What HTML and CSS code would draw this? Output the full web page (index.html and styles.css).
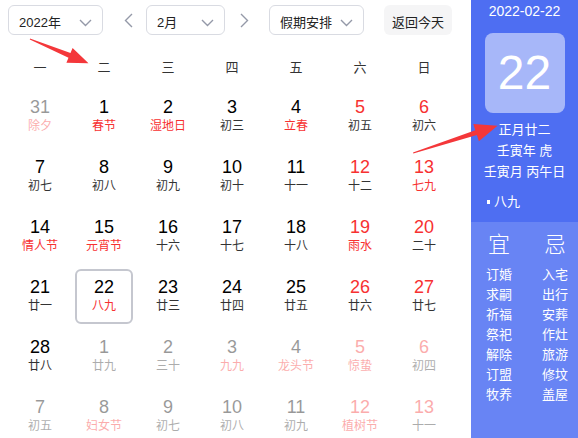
FILE: index.html
```html
<!DOCTYPE html>
<html lang="zh-CN">
<head>
<meta charset="utf-8">
<title>万年历</title>
<link rel="stylesheet" href="styles.css">
</head>
<body>
<div class="page">
  <div class="main">
    <div class="toolbar">
      <div class="select sel-year"><span>2022年</span><svg class="chev" width="13" height="8" viewBox="0 0 13 8"><path d="M1 1l5.5 5.5L12 1" fill="none" stroke="#9499a8" stroke-width="1.4"/></svg></div>
      <svg class="nav nav-prev" width="9" height="15" viewBox="0 0 9 15"><path d="M8 1L1.5 7.5 8 14" fill="none" stroke="#9499a8" stroke-width="1.4"/></svg>
      <div class="select sel-month"><span>2月</span><svg class="chev" width="13" height="8" viewBox="0 0 13 8"><path d="M1 1l5.5 5.5L12 1" fill="none" stroke="#9499a8" stroke-width="1.4"/></svg></div>
      <svg class="nav nav-next" width="9" height="15" viewBox="0 0 9 15"><path d="M1 1l6.5 6.5L1 14" fill="none" stroke="#9499a8" stroke-width="1.4"/></svg>
      <div class="select sel-holiday"><span>假期安排</span><svg class="chev" width="13" height="8" viewBox="0 0 13 8"><path d="M1 1l5.5 5.5L12 1" fill="none" stroke="#9499a8" stroke-width="1.4"/></svg></div>
      <div class="today-btn">返回今天</div>
    </div>
    <div class="weekhead">
      <span>一</span><span>二</span><span>三</span><span>四</span><span>五</span><span>六</span><span>日</span>
    </div>
    <div class="grid">
      <div class="cell other"><div class="box"><span class="num">31</span><span class="lun fest">除夕</span></div></div>
      <div class="cell"><div class="box"><span class="num">1</span><span class="lun fest">春节</span></div></div>
      <div class="cell"><div class="box"><span class="num">2</span><span class="lun fest">湿地日</span></div></div>
      <div class="cell"><div class="box"><span class="num">3</span><span class="lun">初三</span></div></div>
      <div class="cell"><div class="box"><span class="num">4</span><span class="lun fest">立春</span></div></div>
      <div class="cell wk"><div class="box"><span class="num">5</span><span class="lun">初五</span></div></div>
      <div class="cell wk"><div class="box"><span class="num">6</span><span class="lun">初六</span></div></div>

      <div class="cell"><div class="box"><span class="num">7</span><span class="lun">初七</span></div></div>
      <div class="cell"><div class="box"><span class="num">8</span><span class="lun">初八</span></div></div>
      <div class="cell"><div class="box"><span class="num">9</span><span class="lun">初九</span></div></div>
      <div class="cell"><div class="box"><span class="num">10</span><span class="lun">初十</span></div></div>
      <div class="cell"><div class="box"><span class="num">11</span><span class="lun">十一</span></div></div>
      <div class="cell wk"><div class="box"><span class="num">12</span><span class="lun">十二</span></div></div>
      <div class="cell wk"><div class="box"><span class="num">13</span><span class="lun fest">七九</span></div></div>

      <div class="cell"><div class="box"><span class="num">14</span><span class="lun fest">情人节</span></div></div>
      <div class="cell"><div class="box"><span class="num">15</span><span class="lun fest">元宵节</span></div></div>
      <div class="cell"><div class="box"><span class="num">16</span><span class="lun">十六</span></div></div>
      <div class="cell"><div class="box"><span class="num">17</span><span class="lun">十七</span></div></div>
      <div class="cell"><div class="box"><span class="num">18</span><span class="lun">十八</span></div></div>
      <div class="cell wk"><div class="box"><span class="num">19</span><span class="lun fest">雨水</span></div></div>
      <div class="cell wk"><div class="box"><span class="num">20</span><span class="lun">二十</span></div></div>

      <div class="cell"><div class="box"><span class="num">21</span><span class="lun">廿一</span></div></div>
      <div class="cell selected"><div class="box"><span class="num">22</span><span class="lun fest">八九</span></div></div>
      <div class="cell"><div class="box"><span class="num">23</span><span class="lun">廿三</span></div></div>
      <div class="cell"><div class="box"><span class="num">24</span><span class="lun">廿四</span></div></div>
      <div class="cell"><div class="box"><span class="num">25</span><span class="lun">廿五</span></div></div>
      <div class="cell wk"><div class="box"><span class="num">26</span><span class="lun">廿六</span></div></div>
      <div class="cell wk"><div class="box"><span class="num">27</span><span class="lun">廿七</span></div></div>

      <div class="cell"><div class="box"><span class="num">28</span><span class="lun">廿八</span></div></div>
      <div class="cell other"><div class="box"><span class="num">1</span><span class="lun">廿九</span></div></div>
      <div class="cell other"><div class="box"><span class="num">2</span><span class="lun">三十</span></div></div>
      <div class="cell other"><div class="box"><span class="num">3</span><span class="lun fest">九九</span></div></div>
      <div class="cell other"><div class="box"><span class="num">4</span><span class="lun fest">龙头节</span></div></div>
      <div class="cell other wk"><div class="box"><span class="num">5</span><span class="lun fest">惊蛰</span></div></div>
      <div class="cell other wk"><div class="box"><span class="num">6</span><span class="lun">初四</span></div></div>

      <div class="cell other"><div class="box"><span class="num">7</span><span class="lun">初五</span></div></div>
      <div class="cell other"><div class="box"><span class="num">8</span><span class="lun fest">妇女节</span></div></div>
      <div class="cell other"><div class="box"><span class="num">9</span><span class="lun">初七</span></div></div>
      <div class="cell other"><div class="box"><span class="num">10</span><span class="lun">初八</span></div></div>
      <div class="cell other"><div class="box"><span class="num">11</span><span class="lun">初九</span></div></div>
      <div class="cell other wk"><div class="box"><span class="num">12</span><span class="lun fest">植树节</span></div></div>
      <div class="cell other wk"><div class="box"><span class="num">13</span><span class="lun">十一</span></div></div>
    </div>
  </div>
  <div class="side">
    <div class="side-top">
      <div class="side-date">2022-02-22</div>
      <div class="bigday">22</div>
      <div class="lunar-info">
        <div>正月廿二</div>
        <div>壬寅年 虎</div>
        <div>壬寅月 丙午日</div>
      </div>
      <div class="term"><i class="dot"></i>八九</div>
    </div>
    <div class="side-bottom">
      <div class="yiji-col">
        <div class="yiji-title">宜</div>
        <div>订婚</div><div>求嗣</div><div>祈福</div><div>祭祀</div><div>解除</div><div>订盟</div><div>牧养</div>
      </div>
      <div class="yiji-col">
        <div class="yiji-title">忌</div>
        <div>入宅</div><div>出行</div><div>安葬</div><div>作灶</div><div>旅游</div><div>修坟</div><div>盖屋</div>
      </div>
    </div>
  </div>
  <svg class="arrows" width="578" height="438" viewBox="0 0 578 438">
    <polygon fill="#f4373a" points="30,38.6 70.5,53.1 72.6,48 88.5,63.2 66.4,62.8 68.5,57.7 29.8,39.6"/>
    <polygon fill="#f4373a" points="413,152.4 475.3,130.3 473.3,124.1 497.5,125.8 478.9,141.3 476.9,135.1 413.3,153.5"/>
  </svg>
</div>
</body>
</html>
```

FILE: styles.css
```css
* { box-sizing: border-box; }
html, body { margin: 0; padding: 0; background: #fff; }
body {
  font-family: "Liberation Sans", "Noto Sans CJK SC", sans-serif;
  color: #333;
}
.page {
  position: relative;
  width: 578px;
  height: 438px;
  display: flex;
  overflow: hidden;
}
.main {
  width: 471px;
  padding-top: 5px;
}
.toolbar {
  display: flex;
  align-items: center;
  height: 30px;
  padding-left: 8px;
}
.select {
  height: 30px;
  border: 1px solid #d9dbe2;
  border-radius: 6px;
  display: flex;
  align-items: center;
  justify-content: space-between;
  padding: 2px 10px 0 10px;
  font-size: 13px;
  color: #222;
}
.chev { margin-top: 3px; }
.sel-year { width: 95px; }
.sel-month { width: 79px; margin-left: 13px; }
.sel-holiday { width: 95px; margin-left: 20px; }
.nav { display: block; }
.nav-prev { margin-left: 21px; }
.nav-next { margin-left: 15px; }
.today-btn {
  margin-left: 20px;
  width: 68px;
  height: 30px;
  border-radius: 6px;
  background: #f5f5f6;
  font-size: 13px;
  color: #222;
  display: flex;
  align-items: center;
  justify-content: center;
  padding-top: 2px;
}
.weekhead {
  margin-top: 15px;
  height: 36px;
  padding-left: 8px;
  display: grid;
  grid-template-columns: repeat(7, 64px);
  font-size: 13px;
  color: #333;
  line-height: 36px;
  text-align: center;
}
.grid {
  padding-left: 8px;
  display: grid;
  grid-template-columns: repeat(7, 64px);
  grid-auto-rows: 60px;
}
.cell {
  display: flex;
  align-items: center;
  justify-content: center;
}
.box {
  width: 58px;
  height: 55px;
  border: 2px solid transparent;
  border-radius: 6px;
  display: flex;
  flex-direction: column;
  align-items: center;
  padding-top: 6px;
}
.selected .box { border-color: #c5c7cf; }
.num {
  font-size: 18px;
  line-height: 20px;
  color: #000;
}
.lun {
  font-size: 12px;
  line-height: 18px;
  color: #333;
}
.wk .num { color: #f73131; }
.lun.fest { color: #f73131; }
.other .box { opacity: 0.4; }
.side {
  width: 107px;
  display: flex;
  flex-direction: column;
  background: #4e6ef2;
  color: #fff;
}
.side-top {
  height: 222px;
  display: flex;
  flex-direction: column;
  align-items: center;
}
.side-date {
  margin-top: 3px;
  font-size: 14px;
  line-height: 16px;
}
.bigday {
  margin-top: 14px;
  width: 80px;
  height: 80px;
  border-radius: 8px;
  background: rgba(255, 255, 255, 0.5);
  font-size: 48px;
  line-height: 80px;
  text-align: center;
}
.lunar-info {
  margin-top: 6px;
  font-size: 13px;
  line-height: 21px;
  text-align: center;
}
.term {
  align-self: flex-start;
  margin-top: 9px;
  margin-left: 16px;
  font-size: 13px;
  line-height: 21px;
  display: flex;
  align-items: center;
}
.dot {
  display: inline-block;
  width: 3px;
  height: 4px;
  background: #fff;
  margin-right: 4px;
}
.side-bottom {
  flex: 1;
  background: #6884f4;
  display: grid;
  grid-template-columns: 44px 44px;
  column-gap: 12px;
  padding-left: 6px;
  padding-top: 8px;
  font-size: 13px;
  line-height: 20px;
  text-align: center;
}
.yiji-title {
  font-size: 22px;
  line-height: 30px;
  font-weight: 300;
  margin-bottom: 5px;
}
.arrows {
  position: absolute;
  left: 0;
  top: 0;
  pointer-events: none;
}
```
